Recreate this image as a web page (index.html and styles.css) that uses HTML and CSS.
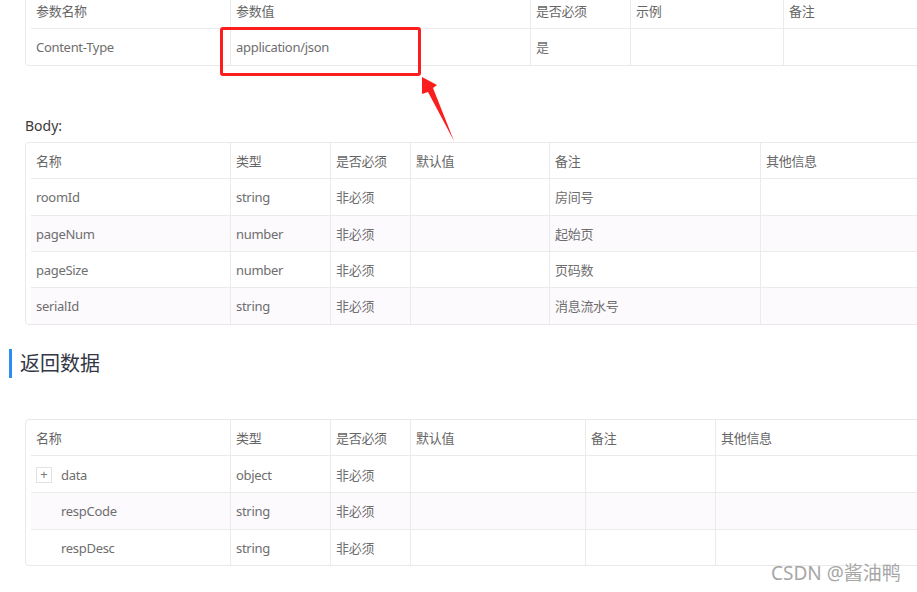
FILE: index.html
```html
<!DOCTYPE html>
<html lang="zh-CN">
<head>
<meta charset="utf-8">
<title>接口文档</title>
<link rel="stylesheet" href="styles.css">
</head>
<body>
<div class="page">
  <div class="tbl-wrap tbl-top">
    <table class="tbl">
      <colgroup><col style="width:200px"><col style="width:300px"><col style="width:100px"><col style="width:153px"><col></colgroup>
      <tr class="head"><td>参数名称</td><td>参数值</td><td>是否必须</td><td>示例</td><td>备注</td></tr>
      <tr class="last"><td>Content-Type</td><td>application/json</td><td>是</td><td></td><td></td></tr>
    </table>
  </div>

  <div class="label">Body:</div>
  <div class="tbl-wrap tbl-body">
    <table class="tbl">
      <colgroup><col style="width:200px"><col style="width:100px"><col style="width:80px"><col style="width:139px"><col style="width:211px"><col></colgroup>
      <tr class="head"><td>名称</td><td>类型</td><td>是否必须</td><td>默认值</td><td>备注</td><td>其他信息</td></tr>
      <tr><td>roomId</td><td>string</td><td>非必须</td><td></td><td>房间号</td><td></td></tr>
      <tr class="alt"><td>pageNum</td><td>number</td><td>非必须</td><td></td><td>起始页</td><td></td></tr>
      <tr><td>pageSize</td><td>number</td><td>非必须</td><td></td><td>页码数</td><td></td></tr>
      <tr class="alt last"><td>serialId</td><td>string</td><td>非必须</td><td></td><td>消息流水号</td><td></td></tr>
    </table>
  </div>

  <h2 class="section">返回数据</h2>

  <div class="tbl-wrap tbl-resp">
    <table class="tbl">
      <colgroup><col style="width:200px"><col style="width:100px"><col style="width:80px"><col style="width:175px"><col style="width:130px"><col></colgroup>
      <tr class="head"><td>名称</td><td>类型</td><td>是否必须</td><td>默认值</td><td>备注</td><td>其他信息</td></tr>
      <tr><td><span class="expand">+</span><span class="indent-name">data</span></td><td>object</td><td>非必须</td><td></td><td></td><td></td></tr>
      <tr class="alt"><td><span class="child">respCode</span></td><td>string</td><td>非必须</td><td></td><td></td><td></td></tr>
      <tr class="last"><td><span class="child">respDesc</span></td><td>string</td><td>非必须</td><td></td><td></td><td></td></tr>
    </table>
  </div>

  <div class="highlight"></div>
  <svg class="arrow" width="917" height="592" viewBox="0 0 917 592">
    <polygon points="422,77 437,85 433,88 454,141 428,92 422,94" fill="#fa1e1e"/>
  </svg>
  <div class="watermark">CSDN @酱油鸭</div>
</div>
</body>
</html>
```

FILE: styles.css
```css
html, body {
  margin: 0;
  padding: 0;
  background: #ffffff;
  overflow: hidden;
}
body {
  width: 917px;
  height: 592px;
  font-family: "Noto Sans", "Noto Sans CJK SC", sans-serif;
}
.page {
  position: relative;
  width: 917px;
  height: 592px;
  overflow: hidden;
}
.tbl-wrap {
  margin-left: 25px;
  width: 1000px;
  border: 1px solid #e9e9e9;
  border-radius: 4px;
  padding-left: 5px;
}
.tbl-top {
  margin-top: -8px;
}
.tbl {
  border-collapse: separate;
  border-spacing: 0;
  table-layout: fixed;
  width: 995px;
  font-size: 13px;
  letter-spacing: -0.3px;
  color: #6e6e6e;
}
.tbl td {
  padding: 2px 5px 0;
  line-height: 33.4px;
  border-bottom: 1px solid #ebebeb;
  border-right: 1px solid #ebebeb;
  white-space: nowrap;
  vertical-align: middle;
}
.tbl td:last-child {
  border-right: none;
}
.tbl tr.last td {
  border-bottom: none;
}
.tbl tr.alt td {
  background: #fdfafe;
}
.tbl tr.head td {
  color: #666666;
}
.label {
  margin: 50px 0 0 25px;
  height: 20px;
  line-height: 20px;
  font-size: 14px;
  color: #3a3a3a;
}
.tbl-body {
  margin-top: 6px;
}
.section {
  margin: 24px 0 0 9px;
  padding-left: 8px;
  border-left: 3px solid #2a8ff0;
  height: 29px;
  line-height: 29px;
  font-size: 20px;
  font-weight: normal;
  color: #333844;
}
.tbl-resp {
  margin-top: 41px;
}
.expand {
  display: inline-block;
  width: 14px;
  height: 14px;
  line-height: 13px;
  border: 1px solid #e2e2e2;
  text-align: center;
  font-size: 13px;
  letter-spacing: 0;
  color: #777;
  vertical-align: middle;
  margin-right: 9px;
  position: relative;
  top: -1px;
}
.indent-name {
  vertical-align: middle;
}
.child {
  padding-left: 25px;
}
.highlight {
  position: absolute;
  left: 220px;
  top: 27px;
  width: 195px;
  height: 43px;
  border: 3px solid #fa1e1e;
  border-radius: 3px;
}
.arrow {
  position: absolute;
  left: 0;
  top: 0;
  pointer-events: none;
}
.watermark {
  position: absolute;
  left: 771px;
  top: 561px;
  font-size: 19px;
  line-height: 24px;
  color: #a6a6a6;
  text-shadow: 0 0 1px #ffffff;
  white-space: nowrap;
}
```
